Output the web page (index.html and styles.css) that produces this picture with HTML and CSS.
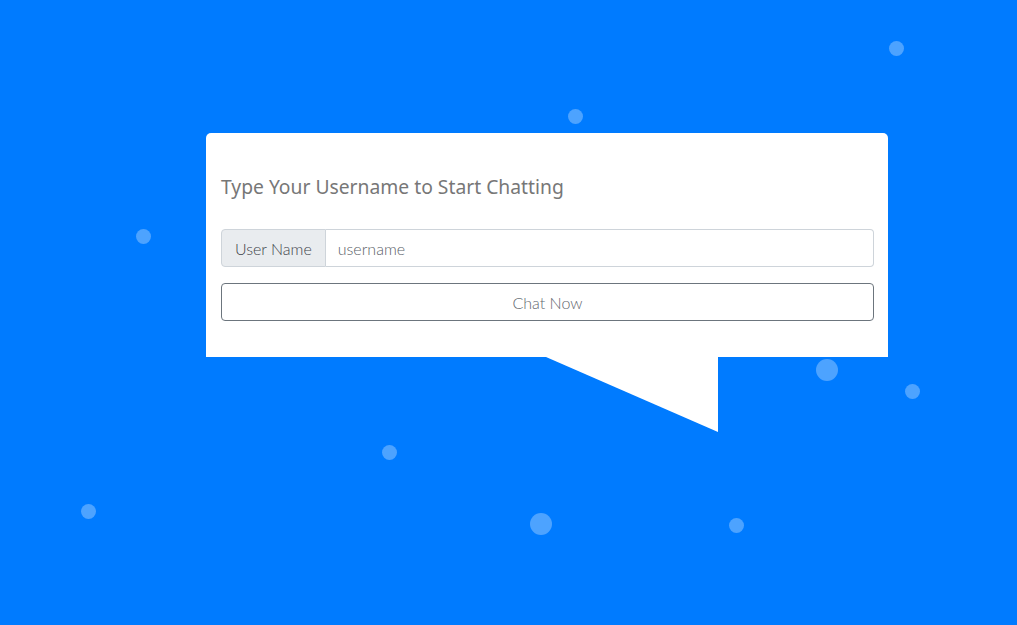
FILE: index.html
```html
<!DOCTYPE html>
<html>
<head>
<meta charset="utf-8">
<link rel="stylesheet" href="styles.css">
</head>
<body>
<div class="bubbles">
  <span class="dot" style="left:889px;top:41px"></span>
  <span class="dot" style="left:568px;top:109px"></span>
  <span class="dot" style="left:136px;top:229px"></span>
  <span class="dot big" style="left:816px;top:359px"></span>
  <span class="dot" style="left:905px;top:384px"></span>
  <span class="dot" style="left:382px;top:445px"></span>
  <span class="dot" style="left:81px;top:504px"></span>
  <span class="dot big" style="left:530px;top:513px"></span>
  <span class="dot" style="left:729px;top:518px"></span>
</div>
<main class="stage">
  <section class="card">
    <h1 class="title">Type Your Username to Start Chatting</h1>
    <div class="input-group">
      <span class="addon">User Name</span>
      <input class="field" type="text" placeholder="username">
    </div>
    <button class="btn">Chat Now</button>
  </section>
</main>
</body>
</html>
```
FILE: styles.css
```css
html, body {
  margin: 0;
  padding: 0;
  height: 100%;
}
body {
  background: #007bff;
  font-family: Lato, "Liberation Sans", sans-serif;
  overflow: hidden;
  position: relative;
}
.bubbles {
  position: absolute;
  inset: 0;
  pointer-events: none;
}
.dot {
  position: absolute;
  width: 15px;
  height: 15px;
  border-radius: 50%;
  background: rgba(255, 255, 255, 0.3);
}
.dot.big {
  width: 22px;
  height: 22px;
}
.stage {
  padding: 133px 0 0 206px;
  position: relative;
}
.card {
  width: 653px;
  background: #fff;
  border-radius: 5px 5px 0 0;
  padding: 34px 14px 36px 15px;
  position: relative;
}
.card::after {
  content: "";
  position: absolute;
  left: 340px;
  top: 100%;
  width: 172px;
  height: 75px;
  background: #fff;
  clip-path: polygon(0 0, 100% 0, 100% 100%);
}
.title {
  margin: 0 0 22px;
  font-family: "Noto Sans", sans-serif;
  font-weight: 400;
  font-size: 19.3px;
  line-height: 40px;
  color: #777;
}
.input-group {
  display: flex;
  height: 38px;
  box-sizing: border-box;
}
.addon {
  display: flex;
  align-items: center;
  padding: 0 13px;
  background: #e9ecef;
  border: 1px solid #ced4da;
  border-radius: 4px 0 0 4px;
  color: #3f454b;
  font-size: 16px;
  font-weight: 300;
}
.field {
  flex: 1;
  min-width: 0;
  border: 1px solid #ced4da;
  border-left: none;
  border-radius: 0 4px 4px 0;
  padding: 0 12px;
  font-family: Lato, sans-serif;
  font-weight: 300;
  font-size: 16px;
  color: #495057;
  outline: none;
}
.field::placeholder {
  color: #5a6168;
}
.btn {
  display: block;
  width: 100%;
  height: 38px;
  margin-top: 16px;
  background: #fff;
  border: 1px solid #6c757d;
  border-radius: 4px;
  color: #5f676f;
  font-family: Lato, sans-serif;
  font-weight: 300;
  font-size: 16px;
}
```
